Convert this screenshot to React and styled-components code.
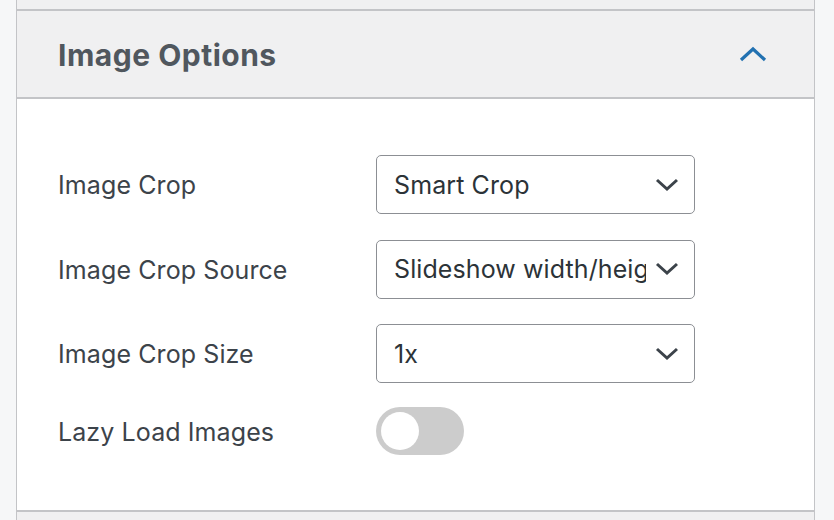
import React, { useState } from "react";
import styled, { createGlobalStyle } from "styled-components";

const GlobalStyle = createGlobalStyle`
  html, body {
    margin: 0;
    padding: 0;
    background: #f6f7f8;
    overflow: hidden;
  }
  body {
    font-family: Inter, "Noto Sans", sans-serif;
  }
`;

const Page = styled.div`
  height: 520px;
  padding: 0 19px 0 16px;
  box-sizing: border-box;
`;

const Panel = styled.div`
  height: 100%;
  border-left: 1px solid #c3c4c7;
  border-right: 1px solid #c3c4c7;
  display: flex;
  flex-direction: column;
`;

const Strip = styled.div`
  height: ${(p) => p.$h}px;
  background: #f0f0f1;
  border-bottom: ${(p) => (p.$last ? "none" : "2px solid #c3c4c7")};
  flex: ${(p) => (p.$last ? "1" : "none")};
`;

const Header = styled.button`
  all: unset;
  box-sizing: border-box;
  height: 88px;
  padding: 0 46px 0 41px;
  background: #f0f0f1;
  border-bottom: 2px solid #c3c4c7;
  display: flex;
  align-items: center;
  justify-content: space-between;
  cursor: pointer;
`;

const Title = styled.h2`
  margin: 0;
  font-size: 30px;
  font-weight: 700;
  color: #50575e;
  letter-spacing: 0.5px;
  padding-top: 2px;
`;

const Body = styled.div`
  height: 413px;
  background: #fff;
  border-bottom: 2px solid #c3c4c7;
  box-sizing: border-box;
  padding: 56px 0 0 41px;
  display: grid;
  grid-template-columns: 318px 319px;
  grid-auto-rows: min-content;
  row-gap: 25.5px;
  align-items: center;
`;

const Label = styled.label`
  font-size: 25px;
  color: #3c434a;
  letter-spacing: 0.1px;
  padding-top: 1px;
`;

const Select = styled.div`
  position: relative;
  box-sizing: border-box;
  height: 59px;
  border: 1.5px solid #8c8f94;
  border-radius: 5px;
  background: #fff;
  padding: 0 48px 0 17px;
  display: flex;
  align-items: center;
  font-size: 25px;
  letter-spacing: 0.1px;
  color: #2c3338;
  white-space: nowrap;
  overflow: hidden;
`;

const SelectText = styled.span`
  overflow: hidden;
  display: block;
`;

const Caret = styled.svg`
  position: absolute;
  right: 14px;
  top: 50%;
  transform: translateY(-50%);
`;

const Toggle = styled.button`
  all: unset;
  width: 88px;
  height: 48px;
  border-radius: 24px;
  background: #cccccc;
  position: relative;
  cursor: pointer;
  margin-top: -2px;
`;

const Knob = styled.span`
  position: absolute;
  top: 5px;
  left: ${(p) => (p.$on ? "45px" : "5px")};
  width: 38px;
  height: 38px;
  border-radius: 50%;
  background: #fff;
`;

const ChevronDown = () => (
  <Caret width="26" height="16" viewBox="0 0 26 16">
    <path d="M3 3 L13 12 L23 3" fill="none" stroke="#3c434a" strokeWidth="3" />
  </Caret>
);

const rows = [
  { label: "Image Crop", value: "Smart Crop" },
  { label: "Image Crop Source", value: "Slideshow width/height" },
  { label: "Image Crop Size", value: "1x" },
];

export default function App() {
  const [lazy, setLazy] = useState(false);
  return (
    <>
      <GlobalStyle />
      <Page>
        <Panel>
          <Strip $h={9} />
          <Header>
            <Title>Image Options</Title>
            <svg width="30" height="18" viewBox="0 0 30 18">
              <path d="M3 15 L15 4 L27 15" fill="none" stroke="#2271b1" strokeWidth="3.2" />
            </svg>
          </Header>
          <Body>
            {rows.map((r) => (
              <React.Fragment key={r.label}>
                <Label>{r.label}</Label>
                <Select>
                  <SelectText>{r.value}</SelectText>
                  <ChevronDown />
                </Select>
              </React.Fragment>
            ))}
            <Label>Lazy Load Images</Label>
            <Toggle onClick={() => setLazy(!lazy)}>
              <Knob $on={lazy} />
            </Toggle>
          </Body>
          <Strip $last />
        </Panel>
      </Page>
    </>
  );
}
